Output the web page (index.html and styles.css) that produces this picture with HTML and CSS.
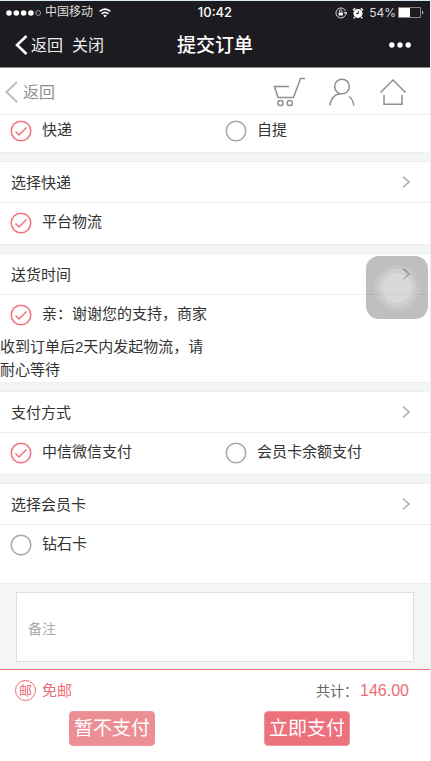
FILE: index.html
```html
<!DOCTYPE html>
<html lang="zh-CN">
<head>
<meta charset="utf-8">
<meta name="viewport" content="width=device-width, initial-scale=1">
<title>提交订单</title>
<link rel="stylesheet" href="styles.css">
</head>
<body>
<header class="top">
  <div class="status">
    <div class="status-left">
      <svg width="36" height="8" viewBox="0 0 36 8" fill="#fff"><circle cx="3" cy="4" r="2.8"/><circle cx="10.3" cy="4" r="2.8"/><circle cx="17.6" cy="4" r="2.8"/><circle cx="24.9" cy="4" r="2.8"/><circle cx="32.2" cy="4" r="2.4" fill="none" stroke="#bbb" stroke-width=".8"/></svg>
      <span class="carrier">中国移动</span>
      <svg width="12" height="10" viewBox="0 0 12 10" fill="none" stroke="#fff" stroke-width="1.6"><path d="M.6 3.4Q6-1.2 11.4 3.4M2.6 5.8Q6 2.8 9.4 5.8"/><path d="M4.2 7.4Q6 6 7.8 7.4L6 9.4Z" fill="#fff" stroke="none"/></svg>
    </div>
    <span class="clock">10:42</span>
    <div class="status-right">
      <svg width="12" height="12" viewBox="0 0 12 12" fill="none" stroke="#ddd"><path d="M10.6 4.2A5 5 0 1 0 10.4 8.2M9.2 5.6h3l-1.5 2z"/><path d="M3.6 5.5h4.2v3H3.6z" fill="#fff" stroke="none"/><path d="M4.4 5.6V4.2a1.3 1.3 0 0 1 2.6 0v1.4"/></svg>
      <svg width="12" height="12" viewBox="0 0 12 12"><circle cx="6" cy="6.4" r="4.5" fill="#fff"/><path d="M1 3.2L3.2 1.2M11 3.2L8.8 1.2M2.8 10l-1 1.4M9.2 10l1 1.4" stroke="#fff" stroke-width="1.5"/><path d="M6.2 3.8v2.8H4" stroke="#1c1b20" fill="none"/></svg>
      <span class="percent">54%</span>
      <svg width="26" height="11" viewBox="0 0 26 11"><path d="M.5.5h22v10H.5z" fill="none" stroke="#888"/><path d="M1 1h11v9H1z" fill="#fff"/><path d="M24 3.500q2.500 2 0 4z" fill="#ccc"/></svg>
    </div>
  </div>
  <nav class="titlebar">
    <div class="nav-left">
      <a class="nav-back" href="#"><svg width="13" height="20" viewBox="0 0 13 20" fill="none" stroke="#fff" stroke-width="2.6"><path d="M11.500 1L2 10l9.500 9"/></svg>返回</a>
      <a href="#">关闭</a>
    </div>
    <h1>提交订单</h1>
    <button class="more" type="button" aria-label="更多"><svg width="22" height="6" viewBox="0 0 22 6" fill="#fff"><circle cx="2.800" cy="3" r="2.700"/><circle cx="11" cy="3" r="2.700"/><circle cx="19.200" cy="3" r="2.700"/></svg></button>
  </nav>
</header>

<nav class="toolbar">
  <a class="tool-back" href="#"><svg width="13" height="22" viewBox="0 0 13 22" fill="none" stroke="#bdbdbd" stroke-width="2"><path d="M12 1L1.500 11 12 21"/></svg>返回</a>
  <div class="tools">
    <a href="#" aria-label="购物车"><svg width="32" height="30" viewBox="0 0 32 30" fill="none" stroke="#8f8f8f" stroke-width="1.500"><path d="M16 9.500H1.500L5 20.500h15.500L27.500 1.500H32"/><circle cx="7.500" cy="26" r="2.600"/><circle cx="16.800" cy="26" r="2.600"/></svg></a>
    <a href="#" aria-label="会员中心"><svg width="26" height="28" viewBox="0 0 26 28" fill="none" stroke="#8f8f8f" stroke-width="1.500"><circle cx="13" cy="8.500" r="7.300"/><path d="M1 27.500C1.500 20.500 6 16 11.500 15.800M20 18.500c3 2 4.300 5 4.800 9"/></svg></a>
    <a href="#" aria-label="首页"><svg width="28" height="28" viewBox="0 0 28 28" fill="none" stroke="#8f8f8f" stroke-width="1.500"><path d="M1.500 14.500L14 2l12.500 12.500M5 17v9.300h18V17"/></svg></a>
  </div>
</nav>

<form class="order">
  <main>
    <section class="group group-first">
      <div class="options">
        <label class="option"><input type="radio" name="delivery" checked>快递</label>
        <label class="option"><input type="radio" name="delivery">自提</label>
      </div>
    </section>
    <section class="group">
      <h2>选择快递<svg class="chevron" viewBox="0 0 8 12"><path d="M1 .8L7 6l-6 5.200"/></svg></h2>
      <div class="options">
        <label class="option"><input type="radio" name="carrier" checked>平台物流</label>
      </div>
    </section>
    <section class="group">
      <h2>送货时间<svg class="chevron" viewBox="0 0 8 12"><path d="M1 .8L7 6l-6 5.200"/></svg></h2>
      <div class="options">
        <label class="option"><input type="radio" name="time" checked>亲：谢谢您的支持，商家收到订单后2天内发起物流，请耐心等待</label>
      </div>
    </section>
    <section class="group">
      <h2>支付方式<svg class="chevron" viewBox="0 0 8 12"><path d="M1 .8L7 6l-6 5.200"/></svg></h2>
      <div class="options">
        <label class="option"><input type="radio" name="payment" checked>中信微信支付</label>
        <label class="option"><input type="radio" name="payment">会员卡余额支付</label>
      </div>
    </section>
    <section class="group group-last">
      <h2>选择会员卡<svg class="chevron" viewBox="0 0 8 12"><path d="M1 .8L7 6l-6 5.200"/></svg></h2>
      <div class="options">
        <label class="option"><input type="radio" name="card">钻石卡</label>
      </div>
    </section>
    <div class="note">
      <textarea placeholder="备注" aria-label="备注"></textarea>
    </div>
  </main>

  <footer class="checkout">
    <div class="summary">
      <div class="postage"><span class="badge">邮</span>免邮</div>
      <div class="total">共计：<strong>146.00</strong></div>
    </div>
    <div class="actions">
      <button class="pay pay-later" type="button">暂不支付</button>
      <button class="pay" type="submit">立即支付</button>
    </div>
  </footer>
</form>
<button class="assist" type="button" aria-label="辅助触控"><span></span></button>
</body>
</html>
```
FILE: styles.css
```css
* {
  box-sizing: border-box;
}

body {
  position: relative;
  display: flex;
  flex-direction: column;
  min-height: 100vh;
  margin: 0;
  border-top: 1px solid #d6e9f5;
  border-right: 1px solid #edf0f2;
  background: #fff;
  color: #333;
  font-family: "Liberation Sans", "Noto Sans CJK SC", sans-serif;
  font-size: 15px;
  line-height: 23px;
}

svg {
  display: block;
  flex: none;
}

a {
  color: inherit;
  text-decoration: none;
}

button {
  padding: 0;
  border: 0;
  background: none;
  font: inherit;
}

/* Status and title bars */
.top {
  border-bottom: 1px solid #8a8a8c;
  background: #1c1b20;
  color: #fff;
}

.status {
  display: grid;
  grid-template-columns: 1fr auto 1fr;
  align-items: center;
  height: 22px;
  padding: 0 6px;
  font-size: 12px;
}

.status-left,
.status-right {
  display: flex;
  align-items: center;
}

.status-left {
  gap: 3px;
}

.carrier {
  margin-right: 3px;
  color: #ddd;
}

.clock {
  font-family: Inter, sans-serif;
  font-size: 13px;
  font-weight: 500;
}

.status-right {
  justify-content: flex-end;
  gap: 5px;
}

.percent {
  margin-right: -3px;
  font-family: Inter, sans-serif;
  color: #ddd;
}

.titlebar {
  display: grid;
  grid-template-columns: 1fr auto 1fr;
  align-items: center;
  height: 44px;
  padding: 0 15px;
  font-size: 16px;
}

.nav-left {
  display: flex;
  gap: 9px;
  color: #eee;
}

.nav-back,
.tool-back {
  display: flex;
  align-items: center;
  gap: 3px;
}

h1 {
  margin: 0;
  font-size: 19px;
  font-weight: 500;
}

.more {
  justify-self: end;
  padding: 8px 4px;
}

/* Shop toolbar */
.toolbar {
  display: flex;
  align-items: center;
  justify-content: space-between;
  height: 47px;
  padding: 2px 23px 0 5px;
  border-bottom: 1px solid #eee;
  color: #8f8f8f;
  font-size: 16px;
}

.tool-back {
  gap: 5px;
}

.tools {
  display: flex;
  align-items: center;
  gap: 24px;
}

/* Option groups */
.order {
  display: flex;
  flex: 1;
  flex-direction: column;
}

main {
  background: #f4f6f6;
}

.group {
  margin-bottom: 10px;
  background: #fff;
  box-shadow: 0 0 0 1px #edefef;
}

.group-first .options {
  min-height: 37px;
}

.group-first .option {
  margin-top: -4px;
}

.group-last {
  margin-bottom: 0;
}

.group-last .options {
  min-height: 58px;
}

h2 {
  display: flex;
  align-items: center;
  justify-content: space-between;
  height: 41px;
  margin: 0;
  padding: 0 20px 0 11px;
  border-bottom: 1px solid #eee;
  font-size: 15px;
  font-weight: 400;
}

.chevron {
  width: 8px;
  height: 12px;
  fill: none;
  stroke: #aaa;
  stroke-width: 1.5;
}

.options {
  display: grid;
  grid-template-columns: 1fr 1fr;
}

.option input {
  width: 22px;
  height: 22px;
  margin: 9px 10px;
  appearance: none;
  background: url("data:image/svg+xml,%3Csvg xmlns='http://www.w3.org/2000/svg' viewBox='0 0 22 22' fill='none' stroke='%23a8a8a8' stroke-width='1.5'%3E%3Ccircle cx='11' cy='11' r='9.8'/%3E%3C/svg%3E") center / contain no-repeat;
  vertical-align: middle;
}

.option input:checked {
  background-image: url("data:image/svg+xml,%3Csvg xmlns='http://www.w3.org/2000/svg' viewBox='0 0 22 22' fill='none' stroke='%23f0727d' stroke-width='1.5'%3E%3Ccircle cx='11' cy='11' r='9.8'/%3E%3Cpath d='M5.500 11.500l3.500 3.500 7.500-7.500'/%3E%3C/svg%3E");
}

.option {
  padding-bottom: 1px;
}

/* Order note */
.note {
  padding: 9px 16px 7px;
}

textarea {
  display: block;
  width: 100%;
  height: 70px;
  padding: 25px 11px 0;
  border: 1px solid #dcdfdf;
  border-radius: 0;
  background: #fff;
  font: inherit;
  font-size: 14px;
  resize: none;
}

textarea::placeholder {
  color: #aaa;
}

/* Checkout bar */
.checkout {
  flex: 1;
  border-top: 1px solid #f0747e;
  background: #fff;
}

.summary {
  display: flex;
  align-items: center;
  justify-content: space-between;
  height: 41px;
  padding: 0 21px 0 15px;
}

.postage {
  display: flex;
  align-items: center;
  gap: 6px;
  color: #ec6b76;
}

.badge {
  display: grid;
  place-items: center;
  width: 21px;
  height: 21px;
  border: 1px solid #ec6b76;
  border-radius: 50%;
  font-size: 13px;
  line-height: 19px;
}

.total {
  color: #666;
  font-size: 14px;
}

.total strong {
  margin-left: 2px;
  color: #ec6b76;
  font-size: 16px;
  font-weight: 400;
}

.actions {
  display: flex;
  justify-content: space-between;
  padding: 0 80px 15px 69px;
}

.pay {
  width: 86px;
  height: 35px;
  border: 1px solid #f0939b;
  border-radius: 4px;
  background: #ec717c;
  color: #fff;
  font-size: 19px;
}

.pay-later {
  background: #ec8f95;
}

/* Floating assistive control, above the page */
.assist {
  position: absolute;
  top: 255px;
  right: 2px;
  display: grid;
  place-items: center;
  width: 62px;
  height: 63px;
  border-radius: 13px;
  background: rgba(0, 0, 0, .25);
}

.assist span {
  width: 30px;
  height: 30px;
  border-radius: 50%;
  background: rgba(255, 255, 255, .4);
  box-shadow: 0 0 0 4px rgba(255, 255, 255, .18), 0 0 0 8px rgba(255, 255, 255, .1);
}
```
